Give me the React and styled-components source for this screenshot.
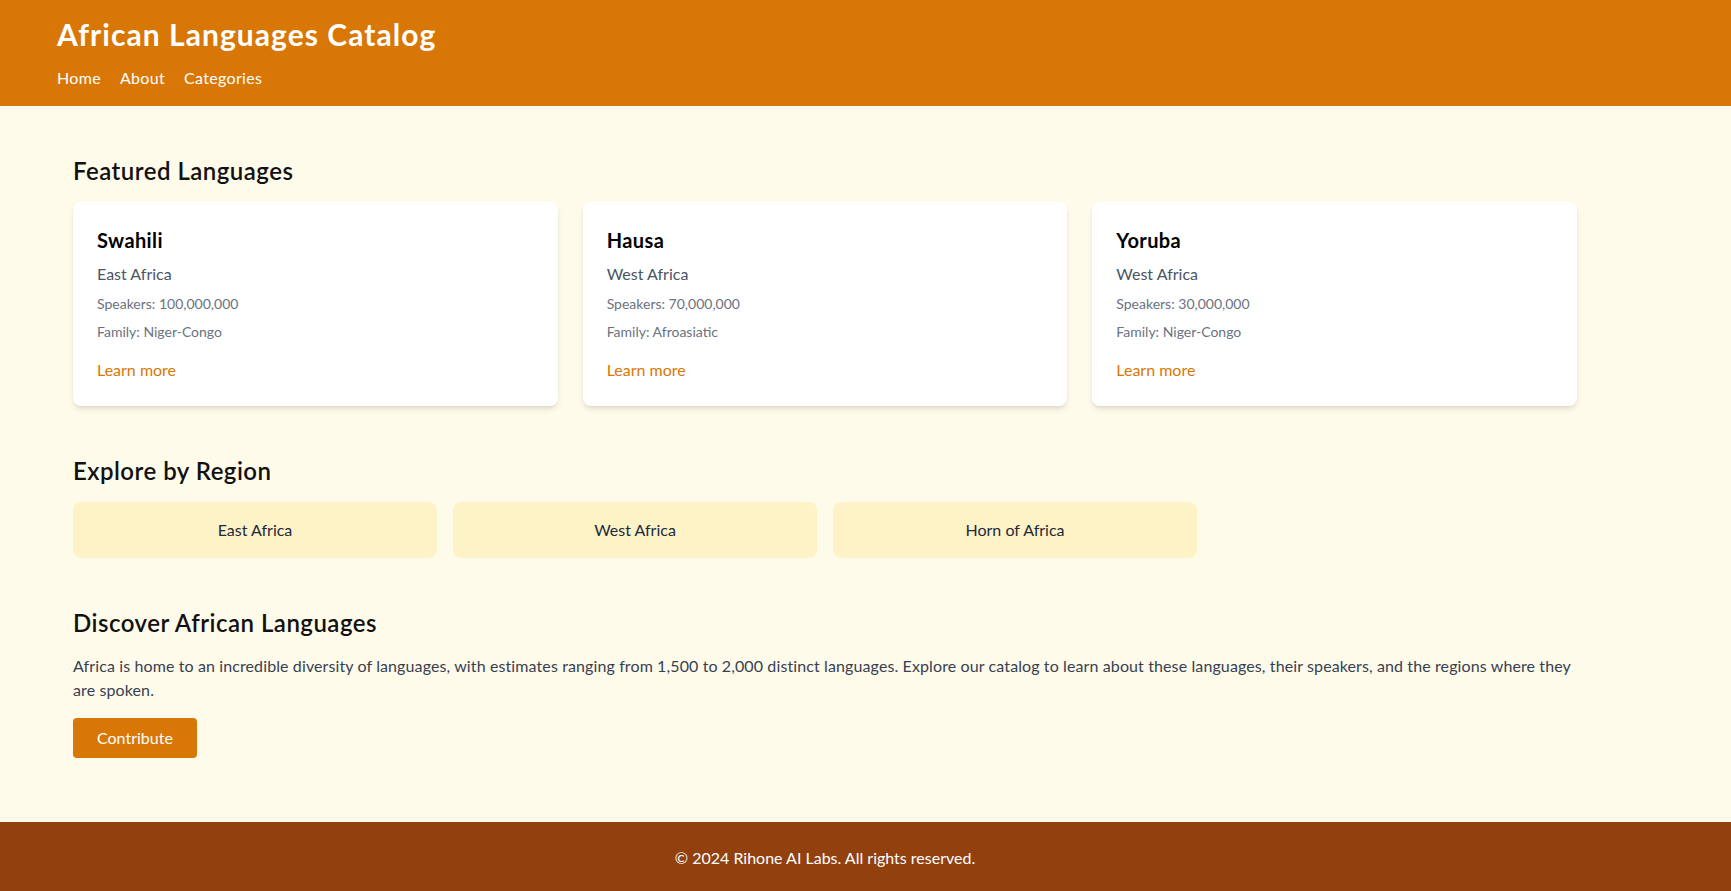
import React from "react";
import styled, { createGlobalStyle } from "styled-components";

const GlobalStyle = createGlobalStyle`
  * { box-sizing: border-box; }
  html, body { margin: 0; padding: 0; }
  body {
    font-family: Lato, "Open Sans", "Noto Sans", sans-serif;
    background: #fffbeb;
    color: #111827;
  }
`;

const Page = styled.div`
  min-height: 100vh;
  display: flex;
  flex-direction: column;
  background: #fffbeb;
`;

const Header = styled.header`
  background: #d97706;
  color: #ffffff;
  padding: 16px 57px;
`;

const SiteTitle = styled.h1`
  margin: 0 0 14px;
  font-size: 30px;
  line-height: 36px;
  font-weight: 700;
  letter-spacing: 0.035em;
`;

const Nav = styled.nav`
  display: flex;
  gap: 19px;
`;

const NavLink = styled.a`
  color: #ffffff;
  text-decoration: none;
  font-size: 16px;
  line-height: 24px;
  letter-spacing: 0.02em;
`;

const Main = styled.main`
  flex: 1;
  padding: 48px 0 64px 73px;
`;

const Container = styled.div`
  width: 1504px;
`;

const Section = styled.section`
  margin-bottom: ${(p) => p.$mb || "48px"};
`;

const SectionTitle = styled.h2`
  margin: 0 0 14px;
  font-size: 24px;
  line-height: 34px;
  font-weight: 600;
  letter-spacing: 0.02em;
  color: #111111;
`;

const CardGrid = styled.div`
  display: grid;
  grid-template-columns: repeat(3, 1fr);
  gap: 25px;
`;

const Card = styled.div`
  background: #ffffff;
  border-radius: 8px;
  padding: 24px;
  box-shadow: 0 4px 6px -1px rgba(0, 0, 0, 0.1), 0 2px 4px -2px rgba(0, 0, 0, 0.1);
`;

const CardTitle = styled.h3`
  margin: 0 0 8px;
  font-size: 20px;
  line-height: 28px;
  font-weight: 700;
  letter-spacing: 0.02em;
  color: #000000;
`;

const CardRegion = styled.p`
  margin: 0 0 8px;
  font-size: 16px;
  line-height: 24px;
  color: #4b5563;
`;

const CardMeta = styled.p`
  margin: 0 0 ${(p) => p.$mb || "8px"};
  font-size: 14px;
  line-height: 20px;
  color: #6b7280;
`;

const LearnMore = styled.a`
  display: block;
  font-size: 16px;
  line-height: 24px;
  color: #d97706;
  text-decoration: none;
`;

const RegionGrid = styled.div`
  display: grid;
  grid-template-columns: repeat(4, 1fr);
  gap: 16px;
`;

const RegionButton = styled.button`
  background: #fef3c7;
  border: none;
  border-radius: 8px;
  padding: 16px;
  font-family: inherit;
  font-size: 16px;
  line-height: 24px;
  color: #1f2937;
  text-align: center;
  cursor: pointer;
`;

const Paragraph = styled.p`
  margin: 0 0 16px;
  font-size: 16px;
  line-height: 24px;
  letter-spacing: 0.007em;
  color: #374151;
`;

const PrimaryButton = styled.button`
  background: #d97706;
  color: #ffffff;
  border: none;
  border-radius: 4px;
  padding: 8px 24px;
  font-family: inherit;
  font-size: 16px;
  line-height: 24px;
  cursor: pointer;
`;

const Footer = styled.footer`
  background: #92400e;
  color: #ffffff;
  padding: 24px 0 24px 73px;
`;

const FooterText = styled.p`
  margin: 0;
  width: 1504px;
  text-align: center;
  font-size: 16px;
  line-height: 24px;
`;

const languages = [
  { name: "Swahili", region: "East Africa", speakers: "100,000,000", family: "Niger-Congo" },
  { name: "Hausa", region: "West Africa", speakers: "70,000,000", family: "Afroasiatic" },
  { name: "Yoruba", region: "West Africa", speakers: "30,000,000", family: "Niger-Congo" },
];

const regions = ["East Africa", "West Africa", "Horn of Africa"];

export default function App() {
  return (
    <Page>
      <GlobalStyle />
      <Header>
        <SiteTitle>African Languages Catalog</SiteTitle>
        <Nav>
          <NavLink href="#">Home</NavLink>
          <NavLink href="#">About</NavLink>
          <NavLink href="#">Categories</NavLink>
        </Nav>
      </Header>
      <Main>
        <Container>
          <Section>
            <SectionTitle>Featured Languages</SectionTitle>
            <CardGrid>
              {languages.map((l) => (
                <Card key={l.name}>
                  <CardTitle>{l.name}</CardTitle>
                  <CardRegion>{l.region}</CardRegion>
                  <CardMeta>Speakers: {l.speakers}</CardMeta>
                  <CardMeta $mb="16px">Family: {l.family}</CardMeta>
                  <LearnMore href="#">Learn more</LearnMore>
                </Card>
              ))}
            </CardGrid>
          </Section>
          <Section>
            <SectionTitle>Explore by Region</SectionTitle>
            <RegionGrid>
              {regions.map((r) => (
                <RegionButton key={r}>{r}</RegionButton>
              ))}
            </RegionGrid>
          </Section>
          <Section $mb="0">
            <SectionTitle>Discover African Languages</SectionTitle>
            <Paragraph>
              Africa is home to an incredible diversity of languages, with estimates ranging from 1,500 to 2,000
              distinct languages. Explore our catalog to learn about these languages, their speakers, and the regions
              where they are spoken.
            </Paragraph>
            <PrimaryButton>Contribute</PrimaryButton>
          </Section>
        </Container>
      </Main>
      <Footer>
        <FooterText>© 2024 Rihone AI Labs. All rights reserved.</FooterText>
      </Footer>
    </Page>
  );
}
